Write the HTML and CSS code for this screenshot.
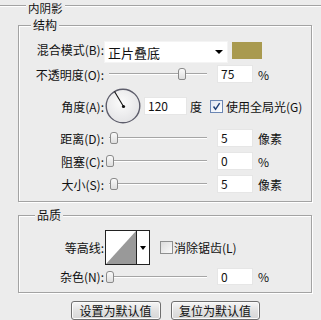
FILE: index.html
```html
<!DOCTYPE html>
<html lang="zh-CN">
<head>
  <meta charset="UTF-8">
  <title>内阴影</title>
  <link rel="stylesheet" href="styles.css">
</head>
<body>
  <fieldset class="panel">
    <legend class="panel-title">内阴影</legend>

    <fieldset class="group group-struct">
      <legend>结构</legend>

      <div class="row row-blend">
        <label class="lbl">混合模式(B):</label>
        <div class="select"><span>正片叠底</span><i class="arrow"></i></div>
        <div class="swatch"></div>
      </div>

      <div class="row row-opacity">
        <label class="lbl">不透明度(O):</label>
        <div class="slider"><span class="thumb" style="left: 72px;"></span></div>
        <div class="field">75</div>
        <span class="unit">%</span>
      </div>

      <div class="row row-angle">
        <label class="lbl">角度(A):</label>
        <svg class="dial" width="36" height="36" viewBox="0 0 36 36">
          <defs>
            <radialGradient id="dialFill" cx="45%" cy="40%" r="60%">
              <stop offset="0" stop-color="#fbfbfb"/>
              <stop offset="1" stop-color="#e4e4e6"/>
            </radialGradient>
          </defs>
          <circle cx="18" cy="18" r="16.8" fill="url(#dialFill)" stroke="#5d5d6b" stroke-width="1.4"/>
          <line x1="18.5" y1="18.5" x2="9.5" y2="3.5" stroke="#111" stroke-width="1.1"/>
          <circle cx="18.5" cy="18.5" r="1.6" fill="#111"/>
        </svg>
        <div class="field field-angle">120</div>
        <span class="unit unit-deg">度</span>
        <span class="check checked">
          <svg width="13" height="13" viewBox="0 0 13 13">
            <path d="M3 6.5 L5.4 9.8 L10.2 2.6" fill="none" stroke="#1d3f78" stroke-width="1.7"/>
          </svg>
        </span>
        <span class="check-text">使用全局光(G)</span>
      </div>

      <div class="row">
        <label class="lbl">距离(D):</label>
        <div class="slider"><span class="thumb" style="left: 4px;"></span></div>
        <div class="field">5</div>
        <span class="unit">像素</span>
      </div>

      <div class="row">
        <label class="lbl">阻塞(C):</label>
        <div class="slider"><span class="thumb" style="left: 0px;"></span></div>
        <div class="field">0</div>
        <span class="unit">%</span>
      </div>

      <div class="row">
        <label class="lbl">大小(S):</label>
        <div class="slider"><span class="thumb" style="left: 4px;"></span></div>
        <div class="field">5</div>
        <span class="unit">像素</span>
      </div>
    </fieldset>

    <fieldset class="group group-quality">
      <legend>品质</legend>

      <div class="row row-contour">
        <label class="lbl">等高线:</label>
        <div class="contour">
          <svg class="contour-curve" width="30" height="33" viewBox="0 0 30 33">
            <rect width="30" height="33" fill="#fff"/>
            <polygon points="0,33 30,0 30,33" fill="#999"/>
          </svg>
          <span class="contour-arrow"><i class="arrow"></i></span>
        </div>
        <span class="check"></span>
        <span class="check-text">消除锯齿(L)</span>
      </div>

      <div class="row row-noise">
        <label class="lbl">杂色(N):</label>
        <div class="slider"><span class="thumb" style="left: 0px;"></span></div>
        <div class="field">0</div>
        <span class="unit">%</span>
      </div>
    </fieldset>

    <div class="buttons">
      <button class="btn btn-default">设置为默认值</button>
      <button class="btn btn-reset">复位为默认值</button>
    </div>
  </fieldset>
</body>
</html>
```

FILE: styles.css
```css
body {
  margin: 0;
  background-color: #ececec;
  font-family: "Noto Sans CJK SC", "Liberation Sans", sans-serif;
  font-size: 12px;
  color: #111;
  overflow: hidden;
}

.panel {
  margin: 0;
  padding: 7px 0 0 18px;
  border: none;
  border-top: 1px solid #a3a3a3;
  box-shadow: inset 0 1px 0 #fff;
  min-width: 0;
}

.panel-title {
  position: relative;
  top: 3px;
  margin-left: 8px;
  padding: 0 2px;
  font-size: 11.5px;
  line-height: 10px;
  background-color: #ececec;
}

.group {
  width: 292px;
  margin: 0;
  padding: 8px 0 8px 0;
  border: 1px solid #a3a3a3;
  box-shadow: inset 1px 1px 0 #fff, 1px 1px 0 #fff;
  min-width: 0;
}

.group legend {
  margin-left: 12px;
  padding: 0 2px;
  line-height: 16px;
  background-color: #ececec;
}

.group-quality {
  margin-top: 5px;
  padding: 7px 0 7px 0;
}

.group-quality legend {
  margin-left: 16px;
}

.row {
  display: flex;
  align-items: center;
  height: 18px;
  margin-top: 5px;
}

.row-blend {
  height: 22px;
  margin-top: 0;
  align-items: flex-start;
}

.row-opacity {
  margin-top: 2px;
}

.row-angle {
  height: 36px;
  margin-top: 5px;
}

.row-contour {
  height: 35px;
  margin-top: 0;
}

.row-noise {
  height: 17px;
  margin-top: 3px;
}

.lbl {
  width: 85px;
  flex: none;
  text-align: right;
  white-space: nowrap;
}

.select {
  width: 124px;
  height: 22px;
  box-sizing: border-box;
  background-color: #fff;
  border: 1px solid #f4f4f4;
  display: flex;
  align-items: center;
  justify-content: space-between;
  padding: 0 4px 0 3px;
  font-size: 13px;
}

.arrow {
  display: block;
  width: 0;
  height: 0;
  border-left: 4px solid transparent;
  border-right: 4px solid transparent;
  border-top: 4px solid #000;
}

.swatch {
  width: 30px;
  height: 17px;
  margin: 1px 0 0 4px;
  background-color: #a99a4f;
}

.slider {
  position: relative;
  width: 101px;
  height: 18px;
  margin-left: 2px;
  flex: none;
}

.slider::before {
  content: "";
  position: absolute;
  left: 3px;
  right: 0;
  top: 8px;
  border-top: 1px solid #a5a5a5;
  border-bottom: 1px solid #fff;
}

.thumb {
  position: absolute;
  top: 3px;
  width: 6px;
  height: 10px;
  border: 1px solid #8a8a8a;
  border-radius: 3px 3px 2px 2px;
  background: linear-gradient(#fafafa, #dedede);
}

.field {
  width: 36px;
  height: 18px;
  box-sizing: border-box;
  margin-left: 10px;
  padding-left: 3px;
  background-color: #fff;
  border: 1px solid #e6e6e6;
  line-height: 16px;
  flex: none;
}

.row-noise .field {
  height: 17px;
  line-height: 15px;
}

.unit {
  margin-left: 5px;
}

.dial {
  display: block;
  margin-left: 1px;
  flex: none;
}

.field-angle {
  width: 43px;
  margin-left: 3px;
}

.unit-deg {
  margin-left: 3px;
}

.check {
  width: 13px;
  height: 13px;
  box-sizing: border-box;
  margin-left: 8px;
  border: 1px solid #8e8f8f;
  background: linear-gradient(135deg, #dcdcdc, #fafafa);
  display: flex;
  align-items: center;
  justify-content: center;
}

.check.checked {
  border-color: #6b86b3;
  background: linear-gradient(135deg, #dfe6f2, #fff);
}

.check svg {
  display: block;
}

.check-text {
  margin-left: 3px;
  white-space: nowrap;
}

.row-contour .check {
  margin-left: 10px;
}

.row-contour .check-text {
  margin-left: 1px;
}

.contour {
  display: flex;
  width: 45px;
  height: 35px;
  box-sizing: border-box;
  margin-left: 1px;
  border: 1px solid #222;
  background-color: #fff;
}

.contour-curve {
  display: block;
}

.contour-arrow {
  flex: 1;
  border-left: 1px solid #222;
  display: flex;
  align-items: center;
  justify-content: center;
}

.contour-arrow .arrow {
  border-left-width: 3px;
  border-right-width: 3px;
  border-top-width: 4px;
}

.buttons {
  width: 294px;
  display: flex;
  justify-content: center;
  gap: 10px;
  margin-top: 8px;
}

.btn {
  height: 19px;
  padding: 0;
  font-family: inherit;
  font-size: 12px;
  color: #111;
  border: 1px solid #6f6f6f;
  border-radius: 3px;
  background: linear-gradient(#f6f6f6, #e2e2e2 50%, #d6d6d6);
  box-shadow: inset 0 0 0 1px #fbfbfb;
  line-height: 15px;
}

.btn-default {
  width: 90px;
}

.btn-reset {
  width: 89px;
}
```
